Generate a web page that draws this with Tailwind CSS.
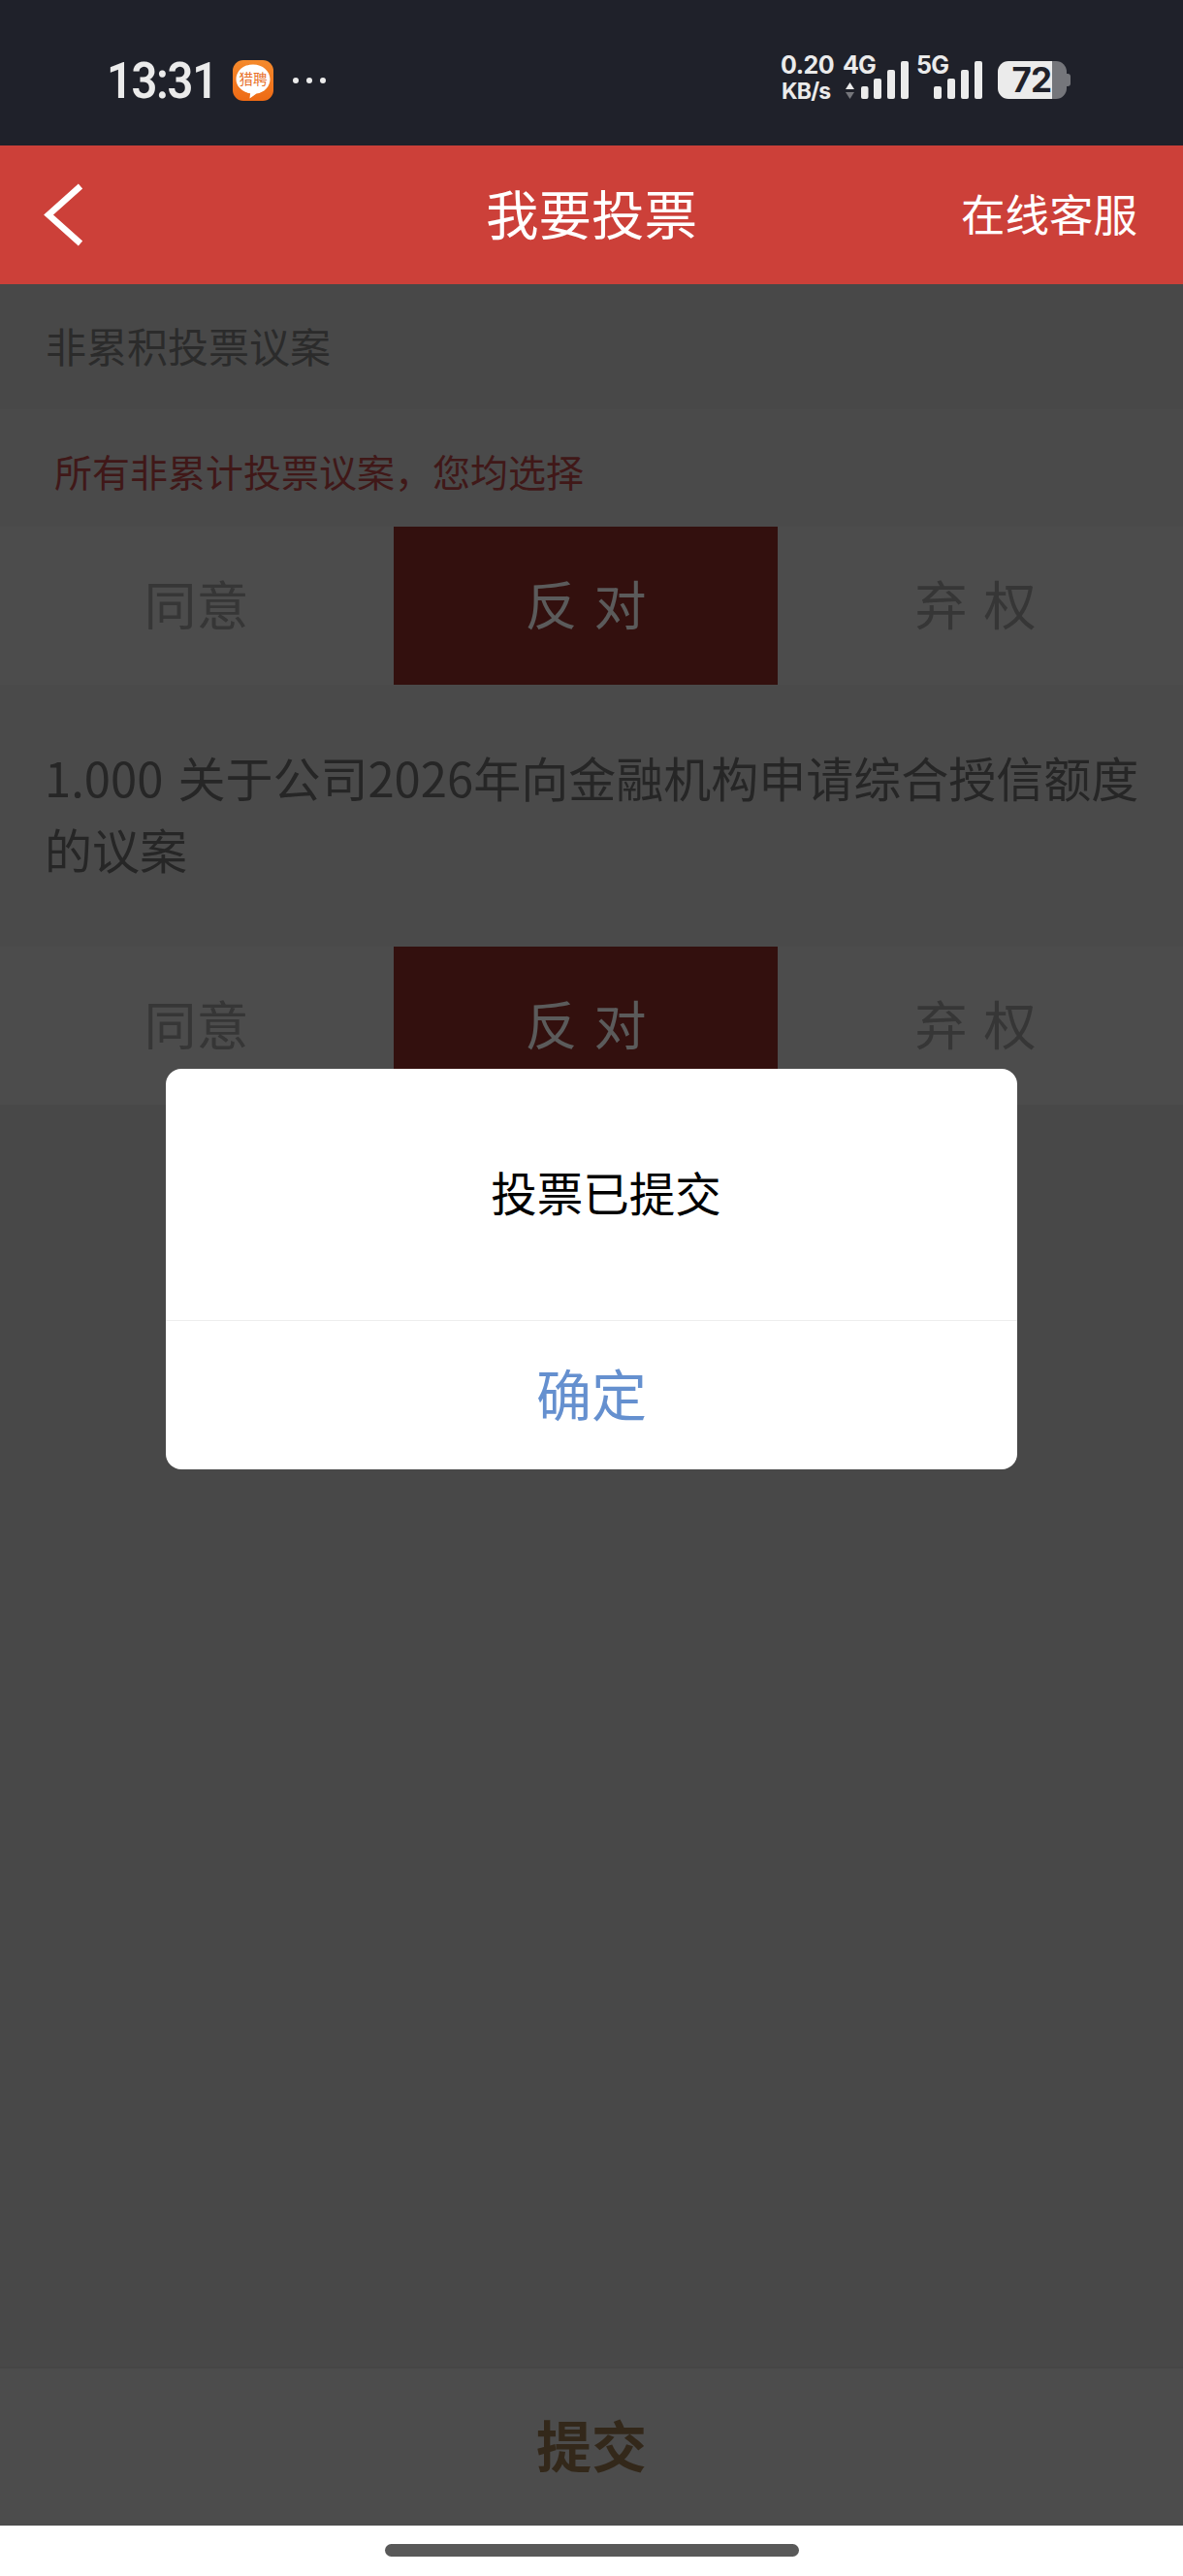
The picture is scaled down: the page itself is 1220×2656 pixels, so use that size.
<!DOCTYPE html>
<html lang="zh-CN">
<head>
<meta charset="UTF-8">
<meta name="viewport" content="width=device-width, initial-scale=1.0">
<script src="https://cdn.jsdelivr.net/npm/@tailwindcss/browser@4"></script>
<title>我要投票</title>
</head>
<body class="bg-white">
<div class="relative w-[1220px] h-[2656px] overflow-hidden flex flex-col font-['Noto_Sans_CJK_SC','Noto_Sans',sans-serif]">

  <!-- status bar -->
  <div class="h-[150px] shrink-0 bg-[#1f212a] relative text-[#ebebeb] font-['Inter',sans-serif]">
    <div class="absolute left-[110px] top-[50px] text-[47px] leading-[66px] font-semibold tracking-[-1.3px] scale-y-[1.1] font-['Roboto',sans-serif]">13:31</div>
    <div class="absolute left-[240px] top-[62px] w-[42px] h-[42px] rounded-[11px] bg-gradient-to-b from-[#f58a2c] to-[#ee6a14]">
      <svg class="absolute left-0 top-0" width="42" height="42" viewBox="0 0 42 42">
        <path d="M21 4.500c9.800 0 17.500 6.600 17.500 15.300 0 7.600-6 13.700-14 14.800L17.500 39.500l.6-5.200C10 33 3.500 27.200 3.500 19.800 3.500 11.100 11.200 4.500 21 4.500z" fill="#fff"/>
      </svg>
      <div class="absolute left-0 top-[10px] w-[42px] text-center text-[14.500px] leading-[18px] font-['Noto_Sans_CJK_SC',sans-serif] text-[#e8702a]">猎聘</div>
    </div>
    <div class="absolute left-[302px] top-[80px] flex gap-[8px]">
      <div class="w-[6px] h-[6px] rounded-full bg-[#ebebeb]"></div>
      <div class="w-[6px] h-[6px] rounded-full bg-[#ebebeb]"></div>
      <div class="w-[6px] h-[6px] rounded-full bg-[#ebebeb]"></div>
    </div>
    <div class="absolute left-[805px] top-[54px] text-[25px] leading-[26px] font-bold tracking-[-0.5px]">0.20</div>
    <div class="absolute left-[806px] top-[81px] text-[23px] leading-[26px] font-bold tracking-[-0.8px]">KB/s</div>
    <div class="absolute left-[869px] top-[54px] text-[25px] leading-[26px] font-bold tracking-[-0.8px]">4G</div>
    <div class="absolute left-[945px] top-[54px] text-[25px] leading-[26px] font-bold tracking-[-0.8px]">5G</div>
    <svg class="absolute left-[870px] top-[60px]" width="150" height="44" viewBox="870 60 150 44">
      <path d="M876.500 85l4.500 7h-9z" fill="#ebebeb"/>
      <path d="M876.500 102l4.500-7h-9z" fill="#75767b"/>
      <g fill="#ebebeb">
        <rect x="888" y="89" width="7.500" height="13" rx="2"/>
        <rect x="901" y="81" width="8" height="21" rx="2"/>
        <rect x="915" y="72" width="8" height="30" rx="2"/>
        <rect x="929" y="63" width="8" height="39" rx="2"/>
        <rect x="963" y="89" width="8" height="13" rx="2"/>
        <rect x="977" y="81" width="8" height="21" rx="2"/>
        <rect x="991" y="72" width="8" height="30" rx="2"/>
        <rect x="1005" y="63" width="8" height="39" rx="2"/>
      </g>
    </svg>
    <div class="absolute left-[1029px] top-[63px] w-[71px] h-[39px] flex">
      <div class="w-[56px] h-full rounded-l-[11px] bg-[#ebebeb] text-[#1f212a] text-[35px] leading-[39px] font-bold text-right pr-[1px] tracking-[-1px]">72</div>
      <div class="flex-1 h-full rounded-r-[11px] bg-[#75767b]"></div>
    </div>
    <div class="absolute left-[1100px] top-[76px] w-[4px] h-[13px] rounded-r-[3px] bg-[#75767b]"></div>
  </div>

  <!-- header -->
  <header class="h-[143px] shrink-0 bg-[#cc4039] relative flex items-center justify-center text-white">
    <svg class="absolute left-[44px] top-[38px]" width="44" height="68" viewBox="44 188 44 68" fill="none">
      <path d="M83 192 L50 221.500 L83 251" stroke="#fff" stroke-width="6.500"/>
    </svg>
    <h1 class="text-[54.500px] leading-[80px] -mt-[6px]">我要投票</h1>
    <div class="absolute right-[47px] top-[35px] text-[45.500px] leading-[68px]">在线客服</div>
  </header>

  <!-- page, dimmed by the dialog -->
  <main class="flex-1 flex flex-col bg-[#484848]">
    <div class="h-[129px] shrink-0 flex items-center pl-[47px] pb-[5px] text-[42px] text-[#2b2b2b]">非累积投票议案</div>

    <div class="h-[121px] shrink-0 bg-[#4a4a4a] pl-[56px] pt-[34px] text-[39px] leading-[58px] text-[#401818]">所有非累计投票议案，您均选择</div>
    <div class="h-[163px] shrink-0 bg-[#4c4c4c] flex text-[54px] text-[#363636]">
      <div class="w-[406px] flex items-center justify-center pr-[1px] pb-[6px]">同意</div>
      <div class="w-[396px] flex items-center justify-center pb-[6px] bg-[#33100e] text-[#5b5b5b] [word-spacing:5px]">反 对</div>
      <div class="flex-1 flex items-center justify-center pr-[10px] pb-[6px] [word-spacing:5px]">弃 权</div>
    </div>

    <div class="h-[270px] shrink-0 bg-[#4a4a4a] pl-[46px] pr-[40px] pt-[58px] text-[49px] leading-[74px] text-[#262626] [word-spacing:4px]">1.000 关于公司2026年向金融机构申请综合授信额度的议案</div>
    <div class="h-[163px] shrink-0 bg-[#4c4c4c] flex text-[54px] text-[#363636]">
      <div class="w-[406px] flex items-center justify-center pr-[1px] pb-[6px]">同意</div>
      <div class="w-[396px] flex items-center justify-center pb-[6px] bg-[#33100e] text-[#5b5b5b] [word-spacing:5px]">反 对</div>
      <div class="flex-1 flex items-center justify-center pr-[10px] pb-[6px] [word-spacing:5px]">弃 权</div>
    </div>

    <div class="flex-1"></div>

    <footer class="h-[164px] shrink-0 bg-[#4c4c4c] border-t-2 border-[#464646] flex items-center justify-center pb-[6px] text-[57px] font-bold text-[#33281a]">提交</footer>
  </main>

  <!-- home indicator -->
  <div class="h-[52px] shrink-0 bg-white flex justify-center pt-[19px]">
    <div class="w-[427px] h-[13px] rounded-full bg-[#595959]"></div>
  </div>

  <!-- dialog -->
  <div class="absolute left-[171px] top-[1102px] w-[878px] h-[413px] rounded-[16px] bg-white flex flex-col">
    <div class="h-[260px] shrink-0 flex items-center justify-center pl-[30px] pb-[6px] text-[47.500px] text-black border-b border-[#eeeeee]">投票已提交</div>
    <div class="flex-1 flex items-center justify-center pb-[6px] text-[57px] text-[#6590cf]">确定</div>
  </div>
</div>
</body>
</html>
